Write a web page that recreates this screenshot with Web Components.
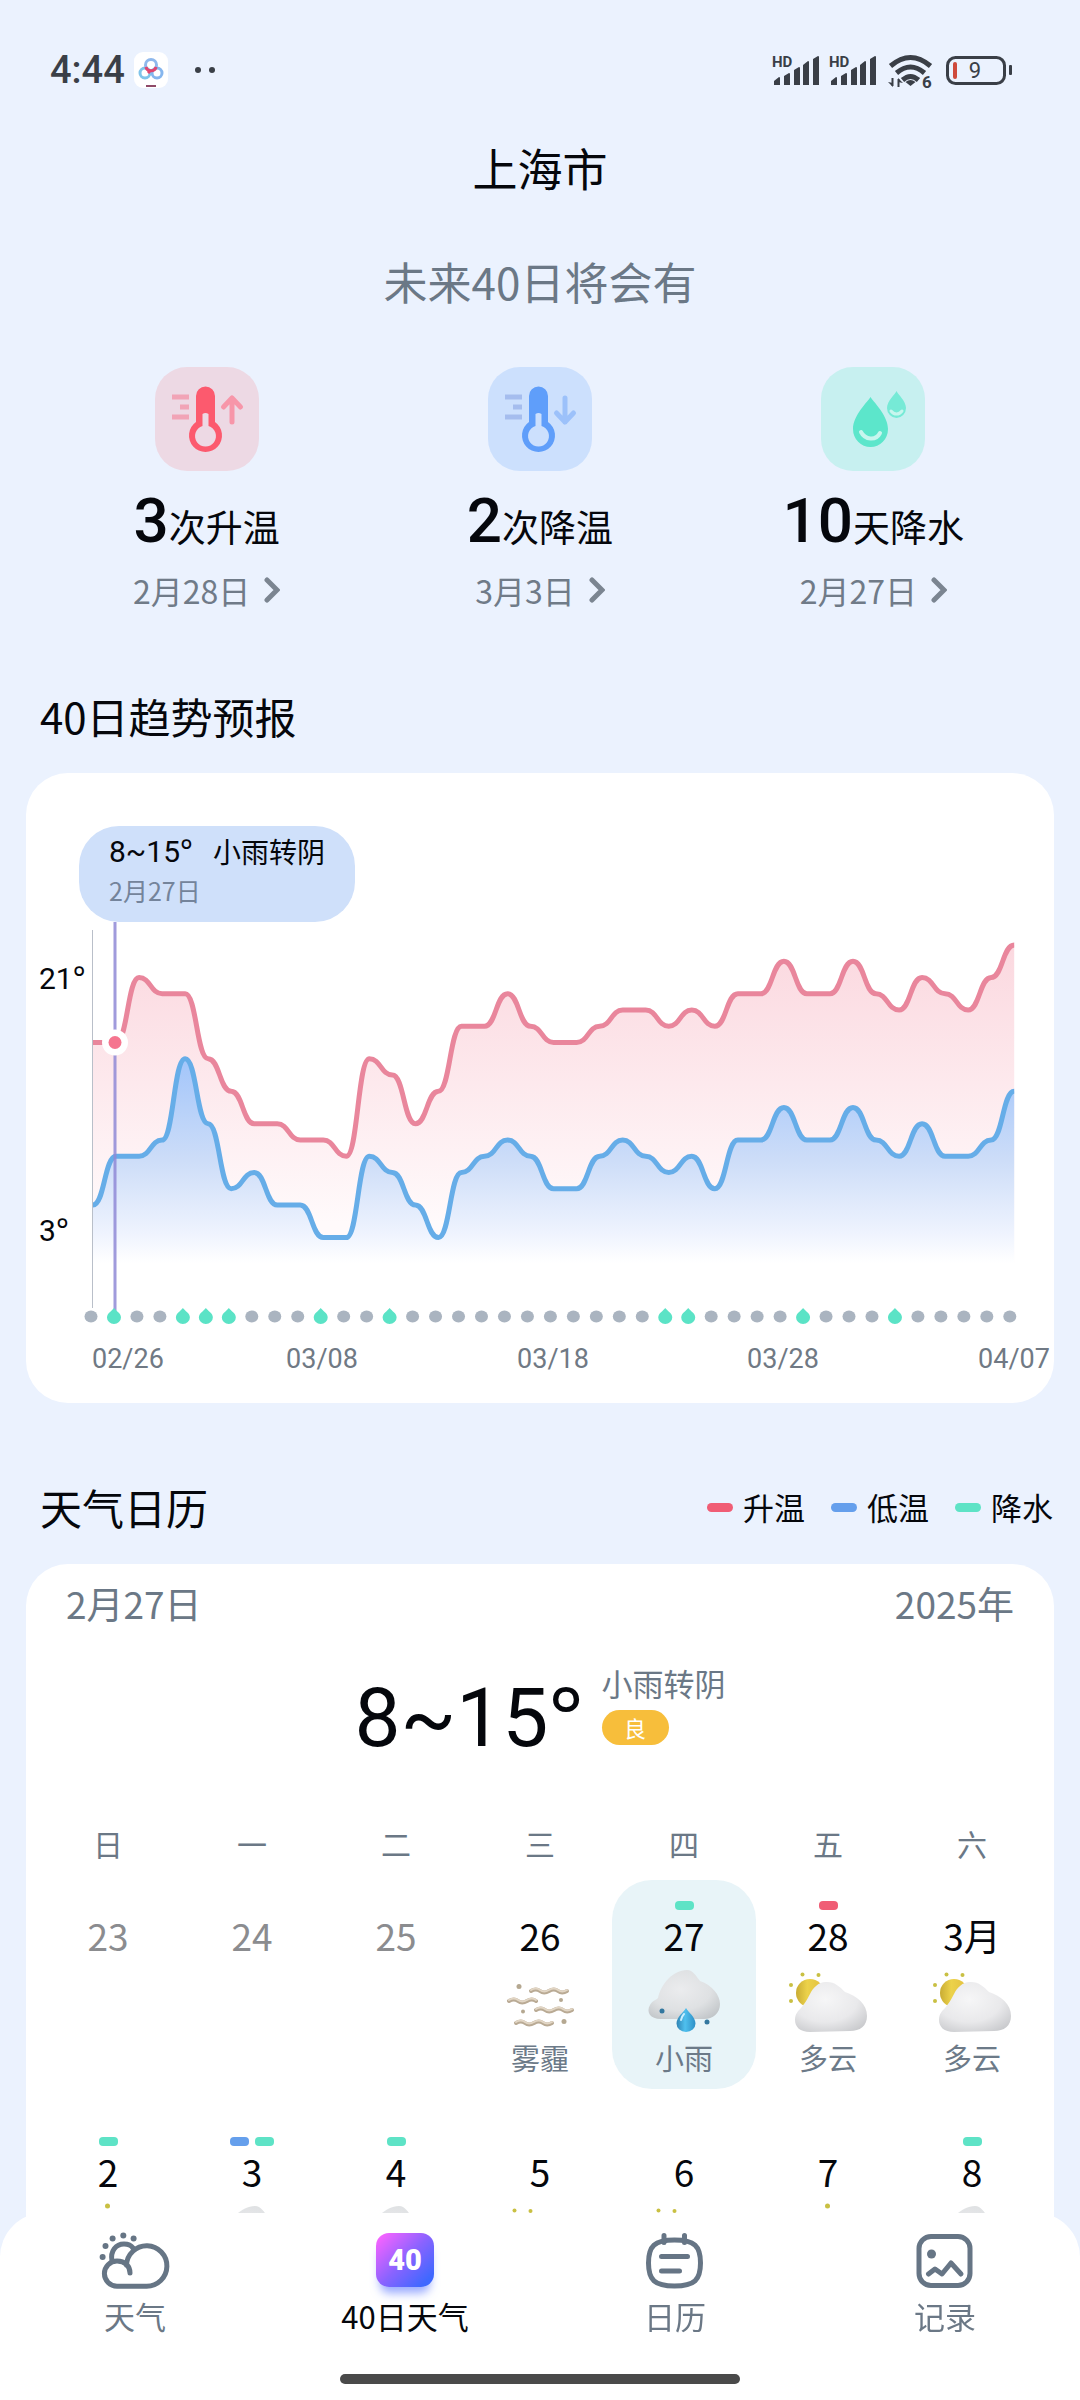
<!DOCTYPE html>
<html lang="zh-CN">
<head>
<meta charset="utf-8">
<meta name="viewport" content="width=device-width, initial-scale=1">
<title>40日天气</title>
<style>
  :root {
    --bg: #ebf2fe;
    --ink: #05070c;
    --muted: #6b7886;
    --red: #f05d75;
    --blue: #659fec;
    --green: #5ee3c6;
    --cjk: "Noto Sans CJK SC", sans-serif;
    --num: Roboto, "Noto Sans CJK SC", sans-serif;
    --deg: "Noto Sans", sans-serif;
  }
  html, body { margin: 0; background: var(--bg); }
  body { font-family: var(--cjk); color: var(--ink); }
</style>
</head>
<body>
<weather-app></weather-app>
<script>
const define = (name, html, setup) => {
  const tpl = document.createElement('template');
  tpl.innerHTML = html;
  customElements.define(name, class extends HTMLElement {
    constructor() {
      super();
      this.attachShadow({ mode: 'open' }).append(tpl.content.cloneNode(true));
    }
    connectedCallback() { if (setup) setup(this, this.shadowRoot); }
  });
};

/* ---------- status bar ---------- */
define('status-bar', `
<style>
  :host { display: flex; align-items: center; height: 139px; padding: 0 67px 0 50px; color: #3a3f47; }
  .time { font: 500 38px/48px var(--num); }
  .app { margin-left: 9px; }
  .dots { margin-left: 25px; }
  .sys { margin-left: auto; }
  svg { display: block; }
</style>
<span class="time">4:44</span>
<svg class="app" width="34" height="36" viewBox="0 0 34 36">
  <rect width="34" height="36" rx="9" fill="#fff"/>
  <g fill="none" stroke-width="3">
    <circle cx="11" cy="21" r="5" stroke="#7fc4ea"/>
    <circle cx="23" cy="21" r="5" stroke="#86b6ee"/>
    <circle cx="17" cy="13" r="5.5" stroke="#8fb8ec"/>
    <path d="M11.800 15a5.500 5.500 0 0 0 10.400 0M17 18l-3 3" stroke="#e0456f"/>
  </g>
  <path d="M12 34h10" stroke="#8f4a68" stroke-width="2"/>
</svg>
<svg class="dots" width="26" height="8" viewBox="0 0 26 8" fill="#3a3f47"><circle cx="5" cy="4" r="3"/><circle cx="19" cy="4" r="3"/></svg>
<svg class="sys" width="241" height="48" viewBox="773 46 241 48" fill="#3a3f47">
  <g id="sig">
    <text x="773" y="67" font-family="Roboto" font-weight="700" font-size="15">HD</text>
    <path d="M775 85v-4l5-4q1 0 1 1v7zM785 85V76l5-3q1 0 1 1v11zM795 85V70l5-3q1 0 1 1v17zM804 85V65l5-4q1 0 1 1v23zM814 85V59l5-3q1 0 1 1v28z"/>
  </g>
  <use href="#sig" x="57"/>
  <g fill="none" stroke="#3a3f47" stroke-width="5">
    <path d="M891.500 66q20-17 40 0M897.500 73q14-12 28 0M903.500 80q8-7 16 0"/>
  </g>
  <path d="M911.500 86l-5-4q5-4 10 0z"/>
  <path d="M893.500 78v8M899.500 79v8" stroke="#3a3f47" stroke-width="2"/>
  <path d="M889 82l5 5v-4zM904 83l-5-5v4z"/>
  <text x="923" y="88" font-family="Roboto" font-weight="700" font-size="17">6</text>
  <rect x="948.500" y="57.500" width="57" height="26" rx="8" fill="none" stroke="#3a3f47" stroke-width="3"/>
  <rect x="1010" y="65" width="3" height="10" rx="1"/>
  <rect x="954" y="62" width="4" height="17" rx="2" fill="#cf4a3c"/>
  <text x="976" y="78" text-anchor="middle" font-family="Roboto" font-size="22">9</text>
</svg>`);

/* ---------- summary column ---------- */
const thermo = (main, soft, lines, bg, arrow) => `
  <rect width="104" height="104" rx="32" fill="${bg}"/>
  <path d="M17 30h17M25 40h9M17 50h17" stroke="${lines}" stroke-width="5"/>
  <path d="M41 29a9.500 9.500 0 0 1 19 0v26a16.500 16.500 0 1 1-19 0z" fill="${main}"/>
  <path d="M47.500 47q3-2 6 0v12a10.500 10.500 0 1 1-6 0z" fill="${bg}"/>
  <path d="${arrow}" fill="none" stroke="${soft}" stroke-width="5" stroke-linecap="round" stroke-linejoin="round"/>`;
const tiles = {
  up: thermo('#fc5a6e', '#f796a9', '#f1a4b6', '#edd9e4', 'M77 55V31M68.500 40l8.500-9 8.500 9'),
  down: thermo('#5f9efa', '#9cc1fa', '#a5bdee', '#cce0fd', 'M77 31v24M68.500 46l8.500 9 8.500-9'),
  rain: `
  <rect width="104" height="104" rx="32" fill="#c7f0f0"/>
  <path d="M49.500 30c2 4 17.500 18 17.500 32a17.500 18 0 0 1-35 0c0-14 15.500-28 17.500-32z" fill="#5ce6cb"/>
  <path d="M40 65c4 8 15 9 19 1" fill="none" stroke="#c7f6ee" stroke-width="4" stroke-linecap="round"/>
  <path d="M75.500 24c1 3 9.500 10 9.500 17a9.500 10 0 0 1-19 0c0-7 8.500-14 9.500-17z" fill="#76ead6"/>
  <path d="M70 44c3 4 8 4 11 0" fill="none" stroke="#c7f6ee" stroke-width="3" stroke-linecap="round"/>`
};
define('forecast-event', `
<style>
  :host { display: flex; flex-direction: column; align-items: center; }
  svg { display: block; }
  .line { display: flex; align-items: baseline; font-size: 37px; line-height: 60px; margin-top: 20px; }
  .n { font: 500 62px/60px var(--num); }
  a { display: flex; align-items: center; gap: 14px; margin-top: 14px; color: #707b88; text-decoration: none; font-size: 32px; line-height: 40px; }
</style>
<svg class="tile" width="104" height="104" viewBox="0 0 104 104"></svg>
<div class="line"><span class="n"><slot name="count"></slot></span><span><slot></slot></span></div>
<a href="#calendar"><slot name="date"></slot><svg width="16" height="26" viewBox="0 0 16 26" fill="none" stroke="#7b8591" stroke-width="5" stroke-linecap="round"><path d="M3 3l10 10L3 23"/></svg></a>`,
(el, r) => { r.querySelector('.tile').innerHTML = tiles[el.getAttribute('kind')]; });

/* ---------- trend chart ---------- */
const HIGH = [15,15,19,18,18,14,12,10,10,9,9,8,14,13,10,12,16,16,18,16,15,15,16,17,17,16,17,16,18,18,20,18,18,20,18,17,19,18,17,19,21];
const LOW = [5,8,8,9,14,10,6,7,5,5,3,3,8,7,5,3,7,8,9,8,6,6,8,9,8,7,8,6,9,9,11,9,9,11,9,8,10,8,8,9,12];
const WET = new Set([1,4,5,6,10,13,25,26,31,35]);
define('trend-chart', `
<style>
  :host { display: block; position: relative; background: #fff; border-radius: 42px; }
  .plot { display: block; width: 100%; height: auto; font-family: var(--num); }
  .deg { font-family: var(--deg); }
  .tip { position: absolute; left: 53px; top: 53px; box-sizing: border-box; width: 276px; height: 96px; padding: 7px 30px; border-radius: 40px; background: #cfe0fa; }
  .row { display: flex; justify-content: space-between; line-height: 36px; font-size: 28px; }
  .row b { font: 400 30px/36px var(--num); }
  .day { font-size: 25px; line-height: 40px; color: #74849b; }
</style>
<svg class="plot" viewBox="0 0 1028 630">
  <defs>
    <linearGradient id="hi" gradientUnits="userSpaceOnUse" x1="0" y1="170" x2="0" y2="450"><stop stop-color="#fbd8df"/><stop offset="1" stop-color="#fffafb"/></linearGradient>
    <linearGradient id="lo" gradientUnits="userSpaceOnUse" x1="0" y1="285" x2="0" y2="490"><stop stop-color="#a2c5fa"/><stop offset=".5" stop-color="#cdddf8"/><stop offset=".85" stop-color="#eef3fe"/><stop offset="1" stop-color="#fff"/></linearGradient>
  </defs>
  <path id="ha" fill="url(#hi)"/>
  <path id="hl" fill="none" stroke="#e9869c" stroke-width="5"/>
  <path id="la" fill="url(#lo)"/>
  <path id="ll" fill="none" stroke="#66ade8" stroke-width="5"/>
  <path d="M66.500 157V535" stroke="#b9bfc9"/>
  <path d="M89 149V538" stroke="#8f8ad6" stroke-opacity=".85" stroke-width="3"/>
  <circle cx="89" cy="269.500" r="13" fill="#fff"/><circle cx="89" cy="269.500" r="6.500" fill="#f5758f"/>
  <g id="dots"></g>
  <g font-size="30" fill="#05070c"><text x="13" y="216">21<tspan class="deg">°</tspan></text><text x="13" y="468">3<tspan class="deg">°</tspan></text></g>
  <g font-size="27" fill="#707984" text-anchor="middle">
    <text x="66" y="595" text-anchor="start">02/26</text><text x="296" y="595">03/08</text><text x="527" y="595">03/18</text><text x="757" y="595">03/28</text><text x="988" y="595">04/07</text>
  </g>
</svg>
<div class="tip"><div class="row"><b>8~15<span class="deg">°</span></b><span>小雨转阴</span></div><div class="day">2月27日</div></div>`,
(el, r) => {
  const X = i => 67 + i * 23.03, Y = t => 464.5 - (t - 3) * 16.25;
  const curve = a => a.map((t, i) => {
    if (!i) return `M${X(0)} ${Y(t)}`;
    const m = (X(i - 1) + X(i)) / 2;
    return `C${m} ${Y(a[i - 1])} ${m} ${Y(t)} ${X(i)} ${Y(t)}`;
  }).join('');
  const $ = id => r.getElementById(id);
  for (const [k, a] of [['h', HIGH], ['l', LOW]]) {
    const d = curve(a);
    $(k + 'l').setAttribute('d', d);
    $(k + 'a').setAttribute('d', `${d}V490H67Z`);
  }
  $('dots').innerHTML = HIGH.map((_, i) => {
    const x = 65 + i * 22.97;
    return WET.has(i)
      ? `<path d="M${x} 535c2 3 7 5 7 9.500a7 6.500 0 0 1-14 0c0-4.500 5-6.500 7-9.500z" fill="#5be3c6"/>`
      : `<ellipse cx="${x}" cy="543.500" rx="6.500" ry="6" fill="#aab4c0"/>`;
  }).join('');
});

/* ---------- weather pictures ---------- */
const defs = `<defs>
  <radialGradient id="c" cx=".42" cy=".35" r=".75"><stop stop-color="#f6f6f7"/><stop offset=".6" stop-color="#e9e9eb"/><stop offset="1" stop-color="#c9cacd"/></radialGradient>
  <radialGradient id="d" cx=".45" cy=".4" r=".7"><stop stop-color="#ebecee"/><stop offset=".6" stop-color="#dfe1e3"/><stop offset="1" stop-color="#c2c6c9"/></radialGradient>
  <linearGradient id="s" x1="0" x2="1"><stop stop-color="#c9ac34"/><stop offset=".4" stop-color="#ecd24a"/><stop offset="1" stop-color="#e2bf3f"/></linearGradient>
  <linearGradient id="w" x1="0" x2="1"><stop stop-color="#2f83b4"/><stop offset=".45" stop-color="#4fc0ee"/><stop offset="1" stop-color="#2d8fc6"/></linearGradient></defs>`;
const wave = (x, y, n) => `M${x} ${y}` + 'q5-3 9 0t9 0'.repeat(n);
const pictures = {
  haze: `<g fill="none" stroke-linecap="round"><g stroke="#b9aa94" stroke-width="4"><path d="${wave(31, 29, 2)}"/><path d="${wave(9, 39, 1)}q5-3 9 0"/><path d="${wave(36, 48, 2)}"/><path d="${wave(16, 61, 2)}"/></g>
    <g stroke="#e2d6c5" stroke-width="2"><path d="${wave(31, 28, 2)}"/><path d="${wave(9, 38, 1)}q5-3 9 0"/><path d="${wave(36, 47, 2)}"/><path d="${wave(16, 60, 2)}"/></g></g>
    <g fill="#b5a891"><circle cx="19" cy="24.500" r="2.500"/><circle cx="61" cy="38" r="2"/><circle cx="23" cy="49.500" r="2"/><circle cx="64" cy="59.500" r="2.500"/></g>`,
  rain: `<path d="M17 57C6 57 2 50 6 43c2-4 6-5 8-7 3-14 15-28 29-28 6 0 9 6 13 11 12 4 20 14 20 23 0 9-7 15-16 15z" fill="url(#d)"/>
    <path d="M42 46c2 4 9.500 9 9.500 15.500a9.500 8.500 0 0 1-19 0C32.500 55 40 50 42 46z" fill="url(#w)"/><path d="M37 58q1-4 3-6" stroke="#c9efff" stroke-width="2" fill="none" stroke-linecap="round"/>
    <g fill="#33779f"><circle cx="18" cy="49" r="2.500"/><circle cx="63" cy="60" r="2.500"/></g>`,
  cloudy: `<g fill="#c9c043"><circle cx="14.500" cy="12.500" r="2"/><circle cx="30.500" cy="13" r="2"/><circle cx="3" cy="23" r="2"/><circle cx="3" cy="39" r="2"/></g>
    <circle cx="22" cy="31" r="14" fill="url(#s)"/>
    <path d="M22 70C12 70 7 65 7 58c0-6 3-9 6-12 4-5 6-8 9-14 3-7 10-13 17-12 8 0 13 5 18 10 12 4 22 12 22 24 0 10-7 15-17 15z" fill="url(#c)"/>`,
  sunny: `<g fill="#c9c043"><circle cx="39.500" cy="8" r="2.500"/><circle cx="17" cy="17" r="2"/><circle cx="62" cy="17" r="2"/></g><circle cx="40" cy="42" r="19" fill="url(#s)"/>`
};
define('weather-picture', `
<style>:host { display: block; width: 80px; height: 72px; } svg { display: block; }</style>
<svg width="80" height="72" viewBox="0 0 80 72" aria-hidden="true"></svg>`,
(el, r) => { r.querySelector('svg').innerHTML = defs + pictures[el.getAttribute('kind')]; });

/* ---------- calendar ---------- */
define('day-cell', `
<style>
  :host { display: block; }
  button { all: unset; box-sizing: border-box; width: 100%; height: 209px; padding: 21px 0 0; display: flex; flex-direction: column; align-items: center; border-radius: 40px; cursor: pointer; }
  :host([selected]) button { background: #e8f4f8; }
  .marks { display: flex; gap: 6px; height: 9px; }
  .marks i { width: 19px; border-radius: 4px; }
  .red { background: var(--red); } .blue { background: var(--blue); } .green { background: var(--green); }
  .n { font-size: 37px; line-height: 44px; margin-top: 3px; }
  :host([past]) .n { color: #8b8c8f; }
  weather-picture { margin-top: 5px; }
  .w { font-size: 29px; line-height: 40px; margin-top: 3px; color: #6c7a88; }
</style>
<button type="button"><span class="marks"></span><span class="n"><slot></slot></span></button>`,
(el, r) => {
  const kind = el.getAttribute('kind'), text = el.getAttribute('weather');
  r.querySelector('.marks').innerHTML = (el.getAttribute('marks') || '').split(' ').filter(Boolean).map(m => `<i class="${m}"></i>`).join('');
  const button = r.querySelector('button');
  if (kind) button.insertAdjacentHTML('beforeend', `<weather-picture kind="${kind}"></weather-picture>`);
  if (text) button.insertAdjacentHTML('beforeend', `<span class="w">${text}</span>`);
});

const WEEKS = [
  [['23'], ['24'], ['25'], ['26', 'haze', '雾霾'], ['27', 'rain', '小雨', 'green'], ['28', 'cloudy', '多云', 'red'], ['3月', 'cloudy', '多云']],
  [['2', 'sunny', '', 'green'], ['3', 'rain', '', 'blue green'], ['4', 'rain', '', 'green'], ['5', 'cloudy', ''], ['6', 'cloudy', ''], ['7', 'sunny', ''], ['8', 'rain', '', 'green']]
];
define('weather-calendar', `
<style>
  :host { display: block; background: #fff; border-radius: 42px 42px 0 0; padding: 0 10px; }
  header { display: flex; justify-content: space-between; padding: 11px 30px 0; font-size: 37px; line-height: 56px; color: var(--muted); }
  .now { display: flex; justify-content: center; gap: 18px; margin-top: 28px; }
  .temp { font: 400 82px/110px var(--num); }
  .deg { font-family: var(--deg); }
  .side { display: flex; flex-direction: column; align-items: flex-start; gap: 7px; padding-top: 4px; font-size: 31px; line-height: 40px; color: var(--muted); }
  .aqi { width: 67px; border-radius: 18px; background: #f7be3b; color: #fff; font-size: 22px; line-height: 35px; text-align: center; }
  table { width: 100%; table-layout: fixed; border-collapse: collapse; margin-top: 50px; }
  th { padding: 0 0 17px; font-size: 30px; line-height: 40px; font-weight: 400; color: var(--muted); }
  td { padding: 0 0 27px; }
</style>
<header><span>2月27日</span><span>2025年</span></header>
<div class="now"><span class="temp">8~15<span class="deg">°</span></span><div class="side"><span>小雨转阴</span><span class="aqi">良</span></div></div>
<table><thead><tr><th>日</th><th>一</th><th>二</th><th>三</th><th>四</th><th>五</th><th>六</th></tr></thead><tbody></tbody></table>`,
(el, r) => {
  r.querySelector('tbody').innerHTML = WEEKS.map(w => '<tr>' + w.map(([n, k, t, m]) =>
    `<td><day-cell ${k ? `kind="${k}" weather="${t}"` : 'past'} ${m ? `marks="${m}"` : ''} ${n === '27' ? 'selected' : ''}>${n}</day-cell></td>`).join('') + '</tr>').join('');
});

define('legend-item', `
<style>
  :host { display: flex; align-items: center; gap: 10px; font-size: 31px; line-height: 40px; }
  i { width: 26px; height: 9px; border-radius: 5px; background: var(--dot); }
</style><i></i><span><slot></slot></span>`);

/* ---------- bottom navigation ---------- */
const navIcons = {
  weather: `<svg width="80" height="64" viewBox="95 2228 80 64" fill="none" stroke="#667585" stroke-width="5" stroke-linecap="round">
    <g fill="#667585" stroke="none"><circle cx="102.600" cy="2257" r="3"/><circle cx="105.500" cy="2246" r="3"/><circle cx="112.600" cy="2238.500" r="3"/><circle cx="123.300" cy="2235.500" r="3"/><circle cx="133.600" cy="2238.500" r="3"/></g>
    <path d="M112 2261c-2-10 4-17 12-17 4 0 7 1 9 4"/>
    <path d="M130 2273c0-7-5-12-13-12a12.500 12.500 0 0 0 0 25.200h29.500a20.200 20.200 0 1 0-20-21"/></svg>`,
  forty: `<span class="forty">40</span>`,
  calendar: `<svg width="80" height="64" viewBox="635 2228 80 64" fill="none" stroke="#667585" stroke-width="5" stroke-linecap="round">
    <path d="M674.500 2240c20 0 26 6 26 23s-6 23-26 23-26-6-26-23 6-23 26-23z"/><path d="M664 2235.500v7M684.500 2235.500v7M661.500 2256.500h26M661.500 2271h18"/></svg>`,
  record: `<svg width="80" height="64" viewBox="905 2228 80 64" fill="none" stroke="#667585" stroke-width="5" stroke-linecap="round" stroke-linejoin="round">
    <rect x="919" y="2236.500" width="51" height="49" rx="12"/><circle cx="931.500" cy="2254" r="4.500" fill="#667585" stroke="none"/><path d="M928.500 2274l6.500-5 7 5 9-11 10 11"/></svg>`
};
define('nav-item', `
<style>
  :host { flex: 1; display: block; }
  a { display: flex; flex-direction: column; align-items: center; color: var(--muted); text-decoration: none; font-size: 31px; line-height: 40px; }
  .icon { height: 64px; display: flex; align-items: center; }
  svg { display: block; }
  .label { margin-top: 4px; }
  :host([current]) a { color: var(--ink); }
  .forty { width: 58px; height: 54px; border-radius: 13px; background: linear-gradient(135deg, #f263ff 8%, #8a63ff 50%, #3f68ff 88%); box-shadow: 0 10px 10px -4px #5470ff99; color: #fff; font: 900 29px/54px var(--num); text-align: center; }
</style>
<a href="#"><span class="icon"></span><span class="label"><slot></slot></span></a>`,
(el, r) => {
  r.querySelector('.icon').innerHTML = navIcons[el.getAttribute('icon')];
  if (el.hasAttribute('current')) r.querySelector('a').setAttribute('aria-current', 'page');
});
define('bottom-nav', `
<style>
  :host { display: block; position: fixed; left: 0; right: 0; bottom: 0; background: #fff; border-radius: 44px 44px 0 0; }
  nav { display: flex; padding: 15px 0 38px; }
  .home { width: 400px; height: 10px; margin: 0 auto 16px; border-radius: 5px; background: #4a4a4a; }
</style>
<nav><slot></slot></nav><div class="home"></div>`);

/* ---------- page ---------- */
define('weather-app', `
<style>
  :host { display: flex; flex-direction: column; min-height: 100vh; }
  h1, h2, p { margin: 0; font-weight: 400; }
  h1 { font-size: 45px; line-height: 58px; text-align: center; }
  .lead { margin-top: 54px; font-size: 44px; line-height: 60px; text-align: center; color: var(--muted); }
  .events { display: grid; grid-template-columns: repeat(3, 1fr); padding: 0 40px; margin-top: 56px; }
  .head { display: flex; align-items: center; justify-content: space-between; padding: 0 27px 0 40px; }
  h2 { font-size: 42px; line-height: 60px; }
  .trend { margin-top: 76px; }
  .cal { margin-top: 74px; }
  .legend { display: flex; gap: 26px; }
  trend-chart { margin: 27px 26px 0; }
  weather-calendar { flex: 1; margin: 27px 26px 0; }
</style>
<status-bar></status-bar>
<h1>上海市</h1>
<p class="lead">未来40日将会有</p>
<div class="events">
  <forecast-event kind="up"><span slot="count">3</span>次升温<span slot="date">2月28日</span></forecast-event>
  <forecast-event kind="down"><span slot="count">2</span>次降温<span slot="date">3月3日</span></forecast-event>
  <forecast-event kind="rain"><span slot="count">10</span>天降水<span slot="date">2月27日</span></forecast-event>
</div>
<div class="head trend"><h2>40日趋势预报</h2></div>
<trend-chart></trend-chart>
<div class="head cal" id="calendar"><h2>天气日历</h2>
  <div class="legend"><legend-item style="--dot:var(--red)">升温</legend-item><legend-item style="--dot:var(--blue)">低温</legend-item><legend-item style="--dot:var(--green)">降水</legend-item></div>
</div>
<weather-calendar></weather-calendar>
<bottom-nav>
  <nav-item icon="weather">天气</nav-item><nav-item icon="forty" current>40日天气</nav-item><nav-item icon="calendar">日历</nav-item><nav-item icon="record">记录</nav-item>
</bottom-nav>`);
</script>
</body>
</html>
